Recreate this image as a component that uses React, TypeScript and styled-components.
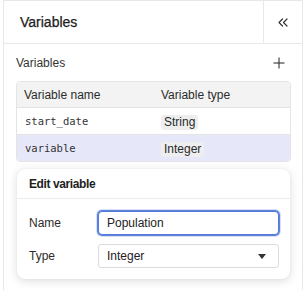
import React from 'react';
import styled, { createGlobalStyle } from 'styled-components';

const GlobalStyle = createGlobalStyle`
  html, body {
    margin: 0;
    padding: 0;
    background: #ffffff;
  }
  body {
    font-family: "Liberation Sans", Arial, sans-serif;
    color: #2b2b2b;
  }
  * {
    box-sizing: border-box;
  }
`;

const Panel = styled.aside`
  width: 300px;
  height: 290px;
  margin-left: 3px;
  border: 1px solid #e8e8e8;
  border-bottom: none;
  background: #ffffff;
  display: flex;
  flex-direction: column;
`;

const PanelHeader = styled.header`
  height: 43px;
  display: flex;
  border-bottom: 1px solid #e8e8e8;
`;

const PanelTitle = styled.h2`
  flex: 1;
  margin: 0;
  padding-left: 16px;
  display: flex;
  align-items: center;
  font-size: 14px;
  font-weight: 500;
  color: #1c1c1c;
  -webkit-text-stroke: 0.25px #1c1c1c;
`;

const CollapseButton = styled.button`
  width: 39px;
  border: none;
  border-left: 1px solid #e8e8e8;
  background: transparent;
  color: #333333;
  display: flex;
  align-items: center;
  justify-content: center;
  padding: 0;
  cursor: pointer;
`;

const PanelBody = styled.div`
  padding: 6px 11px 0 12px;
  display: flex;
  flex-direction: column;
`;

const SectionHeader = styled.div`
  height: 26px;
  display: flex;
  align-items: center;
  justify-content: space-between;
  margin-bottom: 5px;
`;

const SectionTitle = styled.span`
  font-size: 12px;
  color: #333333;
`;

const IconButton = styled.button`
  width: 14px;
  height: 14px;
  margin-right: 5px;
  border: none;
  background: transparent;
  padding: 0;
  color: #333333;
  display: flex;
  align-items: center;
  justify-content: center;
  cursor: pointer;
`;

const Table = styled.div`
  border: 1px solid #e4e4e4;
  border-radius: 4px;
  overflow: hidden;
`;

const Row = styled.div<{ $head?: boolean; $selected?: boolean; $last?: boolean }>`
  display: grid;
  grid-template-columns: 137px 1fr;
  align-items: center;
  height: ${({ $head, $last }) => ($head || $last ? 26 : 27)}px;
  border-bottom: ${({ $last }) => ($last ? 'none' : '1px solid #e4e4e4')};
  background: ${({ $head, $selected }) =>
    $head ? '#f3f3f3' : $selected ? '#e7e7fa' : '#ffffff'};
`;

const HeadCell = styled.div`
  padding-left: 7px;
  font-size: 12px;
  color: #2b2b2b;
`;

const NameCell = styled.div`
  padding-left: 8px;
  font-family: "DejaVu Sans Mono", "Liberation Mono", monospace;
  font-size: 10.5px;
  color: #333333;
`;

const TypeCell = styled.div`
  padding-left: 7px;
`;

const TypeChip = styled.span`
  display: inline-block;
  height: 15px;
  line-height: 15px;
  padding: 0 3px;
  border-radius: 3px;
  background: #eeeeee;
  font-size: 12px;
  color: #2b2b2b;
`;

const EditCard = styled.section`
  margin: 7px 1px 0 1px;
  border-radius: 8px;
  background: #ffffff;
  box-shadow: 0 2px 10px rgba(0, 0, 0, 0.14), 0 0 1px rgba(0, 0, 0, 0.1);
`;

const CardTitle = styled.h3`
  margin: 0;
  height: 30px;
  padding: 1px 0 0 12px;
  display: flex;
  align-items: center;
  font-size: 12px;
  font-weight: 700;
  letter-spacing: -0.4px;
  color: #1e1e1e;
  border-bottom: 1px solid #ececec;
`;

const Form = styled.div`
  padding: 12px 11px 11px 12px;
  display: grid;
  grid-template-columns: 69px 1fr;
  row-gap: 9px;
  align-items: center;
`;

const Label = styled.label`
  font-size: 12px;
  color: #2b2b2b;
`;

const TextInput = styled.input`
  height: 24px;
  width: 100%;
  padding: 0 8px;
  border: 1px solid #5479da;
  border-radius: 4px;
  box-shadow: 0 0 0 1px #5f83de, 0 0 0 2px rgba(95, 131, 222, 0.25);
  outline: none;
  font-family: "Liberation Sans", Arial, sans-serif;
  font-size: 12px;
  color: #222222;
`;

const SelectBox = styled.div`
  height: 24px;
  padding: 0 12px 0 8px;
  border: 1px solid #dcdcdc;
  border-radius: 3px;
  display: flex;
  align-items: center;
  justify-content: space-between;
  font-size: 12px;
  color: #222222;
`;

const variables = [
  { name: 'start_date', type: 'String' },
  { name: 'variable', type: 'Integer' },
];

const App: React.FC = () => {
  return (
    <>
      <GlobalStyle />
      <Panel>
        <PanelHeader>
          <PanelTitle>Variables</PanelTitle>
          <CollapseButton aria-label="Collapse">
            <svg width="10" height="9" viewBox="0 0 10 9" fill="none" stroke="currentColor" strokeWidth="1.2" strokeLinecap="round" strokeLinejoin="round">
              <path d="M4.5 1 L1 4.5 L4.5 8" />
              <path d="M9 1 L5.5 4.5 L9 8" />
            </svg>
          </CollapseButton>
        </PanelHeader>
        <PanelBody>
          <SectionHeader>
            <SectionTitle>Variables</SectionTitle>
            <IconButton aria-label="Add variable">
              <svg width="12" height="12" viewBox="0 0 12 12" fill="none" stroke="currentColor" strokeWidth="1.1">
                <path d="M6 0.5 V11.5" />
                <path d="M0.5 6 H11.5" />
              </svg>
            </IconButton>
          </SectionHeader>
          <Table>
            <Row $head>
              <HeadCell>Variable name</HeadCell>
              <HeadCell>Variable type</HeadCell>
            </Row>
            {variables.map((v, i) => (
              <Row key={v.name} $selected={i === 1} $last={i === variables.length - 1}>
                <NameCell>{v.name}</NameCell>
                <TypeCell>
                  <TypeChip>{v.type}</TypeChip>
                </TypeCell>
              </Row>
            ))}
          </Table>
          <EditCard>
            <CardTitle>Edit variable</CardTitle>
            <Form>
              <Label>Name</Label>
              <TextInput defaultValue="Population" />
              <Label>Type</Label>
              <SelectBox>
                <span>Integer</span>
                <svg width="8" height="5" viewBox="0 0 8 5">
                  <path d="M0 0 H8 L4 5 Z" fill="#333333" />
                </svg>
              </SelectBox>
            </Form>
          </EditCard>
        </PanelBody>
      </Panel>
    </>
  );
};

export default App;
